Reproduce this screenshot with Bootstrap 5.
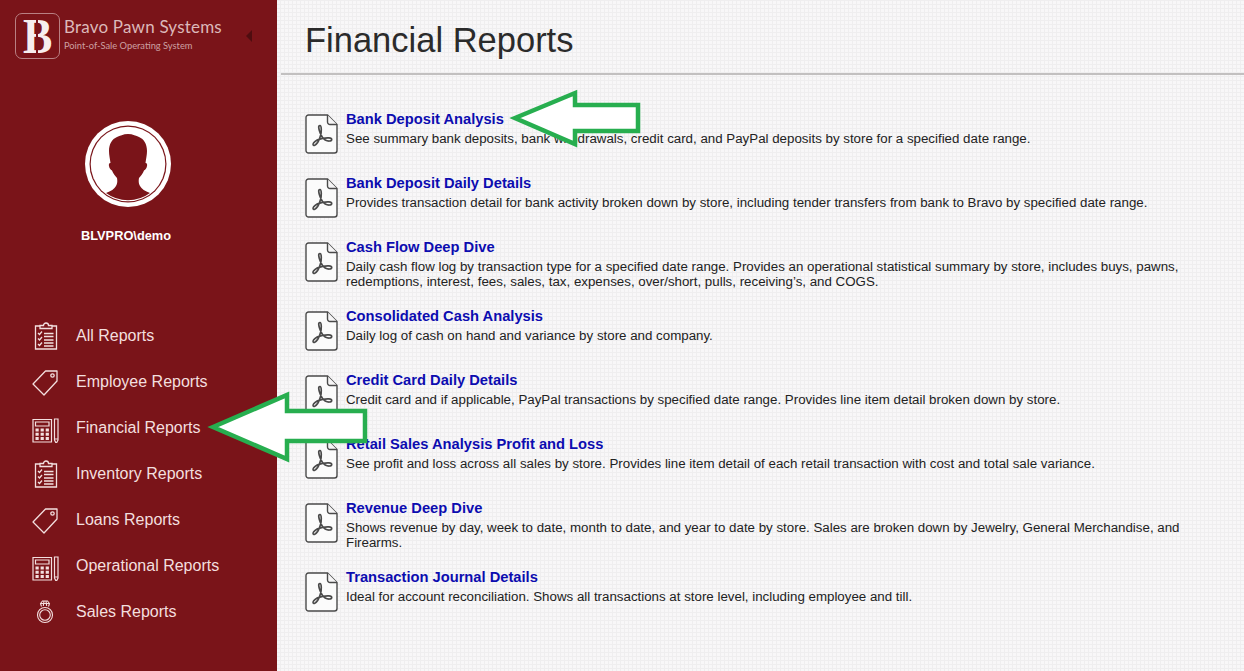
<!DOCTYPE html>
<html lang="en">
<head>
    <meta charset="UTF-8">
    <title>Financial Reports</title>
    <link href="https://cdn.jsdelivr.net/npm/bootstrap@5.3.0/dist/css/bootstrap.min.css" rel="stylesheet">
    <style>
        html, body { height: 100%; overflow: hidden; }
        body {
            font-family: "Liberation Sans", Arial, sans-serif;
            background-color: #f8f7f8;
            background-image: linear-gradient(#efeeef 1px, transparent 1px), linear-gradient(90deg, #efeeef 1px, transparent 1px);
            background-size: 4px 4px;
            color: #222;
        }
        .side-panel { width: 277px; height: 671px; background: #7a1419; flex: none; }
        .brand-row { height: 60px; padding: 13px 0 0 15px; }
        .brand-logo { width: 45px; height: 46px; border: 1px solid #b98083; border-radius: 7px; position: relative; }
        .brand-logo span { font-family: "Liberation Serif", serif; font-weight: 700; font-size: 50px; line-height: 44px; color: #f7eeee; display: block; transform: scaleX(.88); }
        .brand-logo::after { content: ""; position: absolute; left: 20px; top: 1px; bottom: 1px; width: 2px; background: #7a1419; }
        .brand-name { font-family: Lato, sans-serif; font-size: 17px; line-height: 20px; color: #dcb9ba; margin-top: 4px; letter-spacing: .2px; }
        .brand-sub { font-family: Lato, sans-serif; font-size: 9.3px; line-height: 12px; color: #cda0a2; margin-top: 3px; }
        .brand-caret { width: 0; height: 0; border: 6px solid transparent; border-left-width: 0; border-right: 6px solid #4f0d10; margin: 17px 0 0 24px; }
        .user-box { width: 256px; padding-top: 60px; height: 253px; }
        .user-name { font-size: 12.8px; font-weight: 700; color: #fff; margin-top: 20px; padding-right: 4px; line-height: 15px; }
        .side-item { height: 46px; padding-left: 30px; color: #f3dfdf; font-size: 16px; text-decoration: none; }
        .side-icon { width: 30px; height: 30px; flex: none; margin-right: 16px; }
        .main-panel { flex: 1 1 auto; min-width: 0; }
        .page-head { height: 75px; border-bottom: 2px solid #c2c0c0; padding: 18px 0 0 24px; margin-left: 4px; }
        .page-head h1 { font-size: 34.5px; line-height: 44px; margin: 0; color: #2b2b2b; font-weight: 400; }
        .report-list { padding: 36px 50px 0 28px; }
        .report-row { margin-bottom: 19px; min-height: 45px; }
        .report-icon { width: 33px; height: 40px; flex: none; margin: 3px 8px 0 0; }
        .report-title { font-size: 14.7px; line-height: 17px; font-weight: 700; color: #0c0cb0; text-decoration: none; display: block; }
        .report-text { font-size: 13.32px; line-height: 15px; color: #222; margin: 3px 0 0; }
        .call-arrows { position: absolute; left: 0; top: 0; pointer-events: none; }
    </style>
</head>
<body>
<svg width="0" height="0" class="position-absolute">
    <defs>
        <symbol id="ic-list" viewBox="0 0 30 30">
            <g fill="none" stroke="currentColor" stroke-width="1.3">
                <path d="M10 5H5.500v23h21V5H22"/>
                <path d="M10 7.500V4.500h3.500a2.500 2.500 0 0 1 5 0H22v3z"/>
                <path d="M8 12l1.500 1.500L12 10.500M8 17.500l1.500 1.500 2.500-3M8 23l1.500 1.500 2.500-3"/>
                <path d="M14 12.500h9.500M14 15.500h9.500M14 19h9.500M14 22h9.500M14 25h9.500" stroke-width="1.500"/>
            </g>
        </symbol>
        <symbol id="ic-tag" viewBox="0 0 30 30">
            <g fill="none" stroke="currentColor" stroke-width="1.300" stroke-linejoin="round">
                <path d="M3 17L15.500 4H27v10L14 28z"/>
                <circle cx="22.500" cy="8.500" r="1.700"/>
            </g>
        </symbol>
        <symbol id="ic-calc" viewBox="0 -1.500 30 30">
            <g fill="none" stroke="currentColor" stroke-width="1.200">
                <path d="M3 5h18.500v22.500H3z"/>
                <path d="M5.500 7.500h13.500v4H5.500z"/>
                <path d="M24.500 4.500h3.500v21l-1.750 3.500-1.750-3.500zM24.500 24.500h3.500"/>
            </g>
            <g fill="currentColor">
                <path d="M5.500 14h3.200v3H5.500zM10.600 14h3.200v3h-3.200zM15.700 14h3.200v3h-3.200zM5.500 18.300h3.200v3H5.500zM10.600 18.300h3.200v3h-3.200zM15.700 18.300h3.200v3h-3.200zM5.500 22.600h3.200v3H5.500zM10.600 22.600h3.200v3h-3.200zM15.700 22.600h3.200v3h-3.200z"/>
            </g>
        </symbol>
        <symbol id="ic-ring" viewBox="0 1 30 30">
            <g fill="none" stroke="currentColor" stroke-width="1.100">
                <circle cx="15" cy="19" r="7.500"/>
                <circle cx="15" cy="19" r="5.300"/>
                <path d="M11.500 10.500L10.500 7.500 12.500 5h5l2 2.500-1 3M10.500 7.500h9M14 5l-.7 5M16 5l.7 5"/>
            </g>
        </symbol>
        <symbol id="ic-pdf" viewBox="0 0 33 40">
            <path d="M3.500 1h19L32 10.500V36.500a2.500 2.500 0 0 1-2.500 2.500h-26A2.500 2.500 0 0 1 1 36.500V3.500A2.500 2.500 0 0 1 3.500 1z" fill="#fbfbfb" stroke="#4a4a4a" stroke-width="1.400"/>
            <path d="M22.500 1v7a2.500 2.500 0 0 0 2.500 2.500h7" fill="#f6f5f6" stroke="#4a4a4a" stroke-width="1.400"/>
            <path d="M15 11.500c-1.800 0-1.600 3 .2 7.500 1.500 3.600 3.300 6 5 7 2.500 1.400 6.500 1.500 6.500-.5 0-2-4.500-2-9-1.200-4 .7-7.500 2.500-9 4.500-1.300 1.800-.5 3.200 1 2.500 2-1 4.600-5.300 5.800-9.500 1-3.500 1.200-10.300-.5-10.300z" fill="none" stroke="#4a4a4a" stroke-width="1.700"/>
        </symbol>
    </defs>
</svg>

<div class="d-flex">
    <div class="side-panel d-flex flex-column">
        <div class="brand-row d-flex">
            <div class="brand-logo d-flex align-items-center justify-content-center"><span>B</span></div>
            <div class="ms-1">
                <div class="brand-name">Bravo Pawn Systems</div>
                <div class="brand-sub">Point-of-Sale Operating System</div>
            </div>
            <div class="brand-caret"></div>
        </div>
        <div class="user-box text-center">
            <svg width="88" height="88" viewBox="0 0 88 88">
                <circle cx="44" cy="44" r="43" fill="#fff"/>
                <circle cx="44" cy="44" r="38.500" fill="#7a1419"/>
                <circle cx="44" cy="44" r="37.300" fill="#fff"/>
                <path d="M44 14c-5 0-8 2-11 3-5 2-8 7-8 14 0 4 1 8 1.500 12-1 0-2 1-1.500 3 .3 2 1.500 4 3 4.500 1 3 3 5 5 7.500.5 3 .5 5-1 8-1.500 3-5 5-10 7A37 37 0 0 0 66 73c-5-2-8.500-4-10-7-1.500-3-1.500-5-1-8 2-2.500 4-4.500 5-7.500 1.500-.5 2.700-2.500 3-4.500.5-2-.5-3-1.500-3 .5-4 1.500-8 1.500-12 0-7-3-12-8-14-3-1-6-3-11-3z" fill="#7a1419"/>
            </svg>
            <div class="user-name">BLVPRO\demo</div>
        </div>
        <nav class="d-flex flex-column">
            <a href="#" class="side-item d-flex align-items-center"><svg class="side-icon"><use href="#ic-list"/></svg>All Reports</a>
            <a href="#" class="side-item d-flex align-items-center"><svg class="side-icon"><use href="#ic-tag"/></svg>Employee Reports</a>
            <a href="#" class="side-item d-flex align-items-center"><svg class="side-icon"><use href="#ic-calc"/></svg>Financial Reports</a>
            <a href="#" class="side-item d-flex align-items-center"><svg class="side-icon"><use href="#ic-list"/></svg>Inventory Reports</a>
            <a href="#" class="side-item d-flex align-items-center"><svg class="side-icon"><use href="#ic-tag"/></svg>Loans Reports</a>
            <a href="#" class="side-item d-flex align-items-center"><svg class="side-icon"><use href="#ic-calc"/></svg>Operational Reports</a>
            <a href="#" class="side-item d-flex align-items-center"><svg class="side-icon"><use href="#ic-ring"/></svg>Sales Reports</a>
        </nav>
    </div>

    <div class="main-panel">
        <div class="page-head"><h1>Financial Reports</h1></div>
        <div class="report-list">
            <div class="report-row d-flex"><svg class="report-icon"><use href="#ic-pdf"/></svg><div><a href="#" class="report-title">Bank Deposit Analysis</a><p class="report-text">See summary bank deposits, bank withdrawals, credit card, and PayPal deposits by store for a specified date range.</p></div></div>
            <div class="report-row d-flex"><svg class="report-icon"><use href="#ic-pdf"/></svg><div><a href="#" class="report-title">Bank Deposit Daily Details</a><p class="report-text">Provides transaction detail for bank activity broken down by store, including tender transfers from bank to Bravo by specified date range.</p></div></div>
            <div class="report-row d-flex"><svg class="report-icon"><use href="#ic-pdf"/></svg><div><a href="#" class="report-title">Cash Flow Deep Dive</a><p class="report-text">Daily cash flow log by transaction type for a specified date range. Provides an operational statistical summary by store, includes buys, pawns, redemptions, interest, fees, sales, tax, expenses, over/short, pulls, receiving’s, and COGS.</p></div></div>
            <div class="report-row d-flex"><svg class="report-icon"><use href="#ic-pdf"/></svg><div><a href="#" class="report-title">Consolidated Cash Analysis</a><p class="report-text">Daily log of cash on hand and variance by store and company.</p></div></div>
            <div class="report-row d-flex"><svg class="report-icon"><use href="#ic-pdf"/></svg><div><a href="#" class="report-title">Credit Card Daily Details</a><p class="report-text">Credit card and if applicable, PayPal transactions by specified date range. Provides line item detail broken down by store.</p></div></div>
            <div class="report-row d-flex"><svg class="report-icon"><use href="#ic-pdf"/></svg><div><a href="#" class="report-title">Retail Sales Analysis Profit and Loss</a><p class="report-text">See profit and loss across all sales by store. Provides line item detail of each retail transaction with cost and total sale variance.</p></div></div>
            <div class="report-row d-flex"><svg class="report-icon"><use href="#ic-pdf"/></svg><div><a href="#" class="report-title">Revenue Deep Dive</a><p class="report-text">Shows revenue by day, week to date, month to date, and year to date by store. Sales are broken down by Jewelry, General Merchandise, and Firearms.</p></div></div>
            <div class="report-row d-flex"><svg class="report-icon"><use href="#ic-pdf"/></svg><div><a href="#" class="report-title">Transaction Journal Details</a><p class="report-text">Ideal for account reconciliation. Shows all transactions at store level, including employee and till.</p></div></div>
        </div>
    </div>
</div>

<!-- callout arrows sit over the page -->
<svg class="call-arrows" width="1244" height="671" viewBox="0 0 1244 671">
    <g fill="#fff" stroke="#27ae4f" stroke-width="4.500">
        <path d="M515 118L575 93V105H638V131H575V144Z"/>
        <path d="M213 427L287 395V411H365V441H287V459Z"/>
    </g>
</svg>
</body>
</html>
